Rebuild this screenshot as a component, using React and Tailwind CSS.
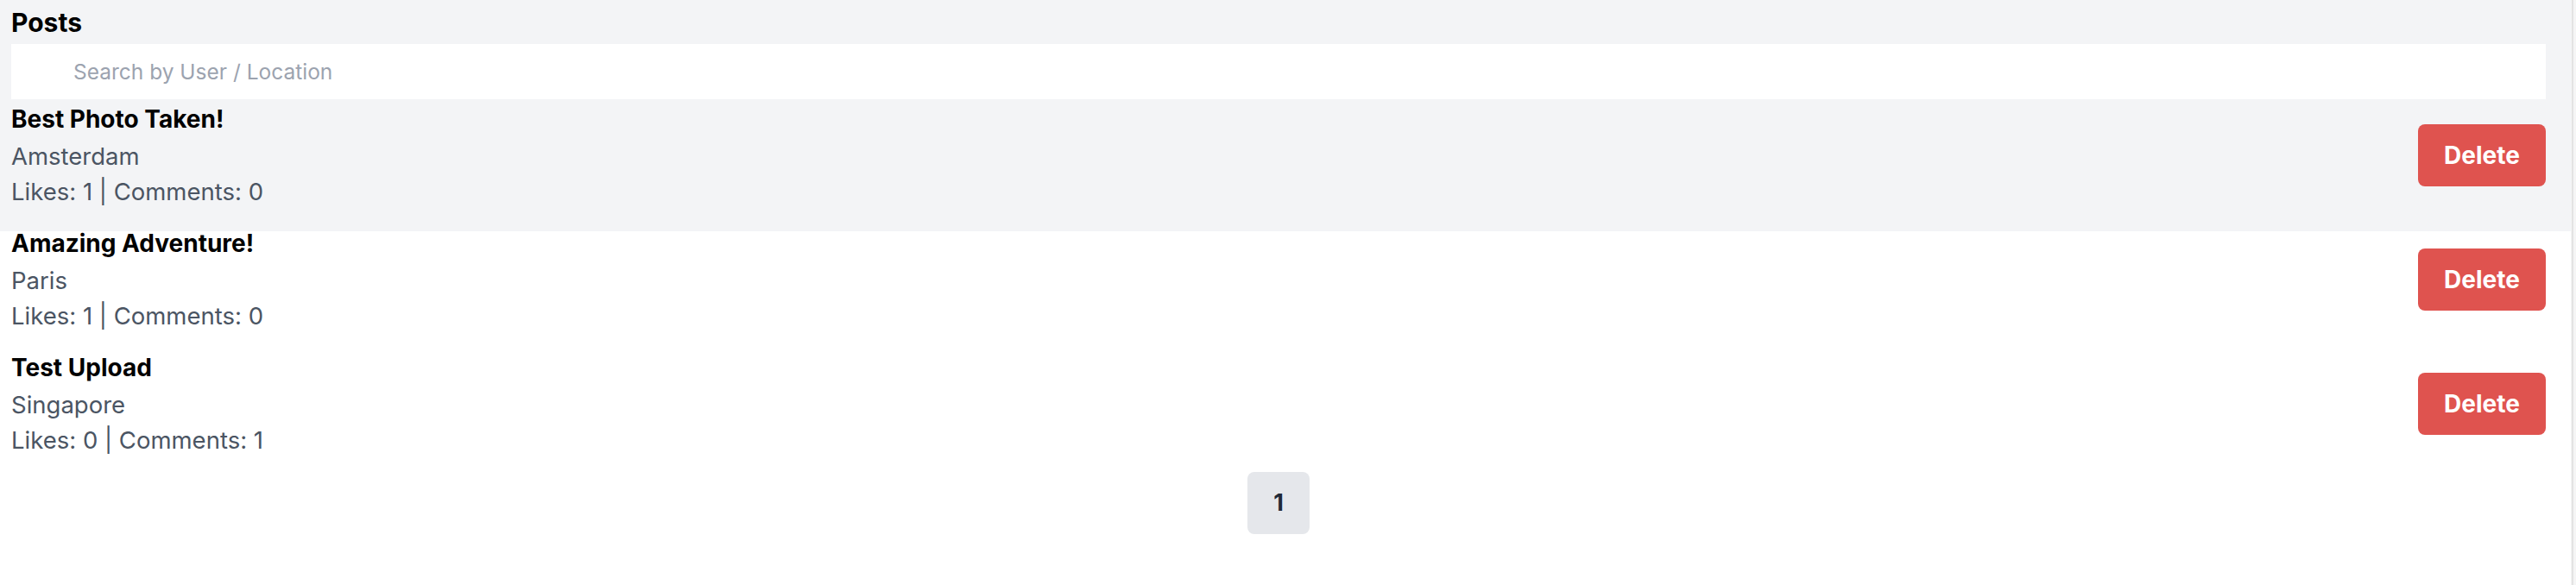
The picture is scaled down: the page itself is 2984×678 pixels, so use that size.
import React from "react";

const posts = [
  { title: "Best Photo Taken!", location: "Amsterdam", likes: 1, comments: 0, active: true },
  { title: "Amazing Adventure!", location: "Paris", likes: 1, comments: 0 },
  { title: "Test Upload", location: "Singapore", likes: 0, comments: 1 },
];

function PostRow({ post }) {
  return (
    <div
      className={`flex h-[144px] items-start justify-between pl-[13px] pr-[29px] last:h-[135px] ${
        post.active ? "bg-[#f3f4f6]" : "bg-white"
      }`}
    >
      <div className="flex flex-col">
        <div className="text-[28px] font-bold leading-[28px] text-black">{post.title}</div>
        <div className="mt-[9px] text-[27.5px] leading-[41px] text-[#4b5563]">{post.location}</div>
        <div className="text-[27.5px] leading-[41px] text-[#4b5563]">
          Likes: {post.likes} | Comments: {post.comments}
        </div>
      </div>
      <button className="mt-[20px] flex h-[72px] w-[148px] items-center justify-center rounded-[8px] bg-[#df534f] text-[28px] font-bold text-white">
        Delete
      </button>
    </div>
  );
}

export default function App() {
  return (
    <div
      className="flex h-[678px] w-full bg-white"
      style={{ fontFamily: "Inter, 'Noto Sans', sans-serif" }}
    >
      <div className="flex min-w-0 flex-1 flex-col">
        <div className="bg-[#f3f4f6] pb-[9px] pl-[13px] pr-[29px] pt-[8px]">
          <h1 className="text-[30px] font-bold leading-[36px] text-black">Posts</h1>
          <div className="mt-[7px] flex h-[64px] items-center bg-white pl-[72px]">
            <input
              className="w-full bg-transparent text-[24.5px] text-[#374151] outline-none placeholder:text-[#9ca3af]"
              placeholder="Search by User / Location"
            />
          </div>
        </div>
        <div className="flex flex-col">
          {posts.map((p) => (
            <PostRow key={p.title} post={p} />
          ))}
        </div>
        <div className="flex justify-center pl-[13px] pr-[29px]">
          <button className="flex h-[72px] w-[72px] items-center justify-center rounded-[8px] bg-[#e5e7eb] text-[27px] font-bold text-[#1f2937]">
            1
          </button>
        </div>
      </div>
      <div className="flex w-[6px] bg-[#f5f5f5] pl-px">
        <div className="h-full w-[2px] bg-[#e3e3e3]" />
      </div>
    </div>
  );
}
